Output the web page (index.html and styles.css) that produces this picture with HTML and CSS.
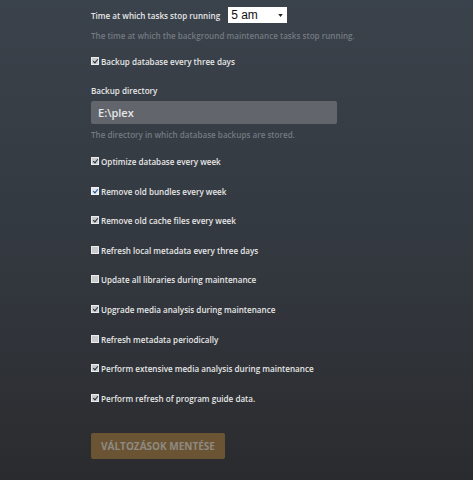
FILE: index.html
```html
<!DOCTYPE html>
<html lang="en">
<head>
    <meta charset="UTF-8">
    <meta name="viewport" content="width=device-width, initial-scale=1.0">
    <title>Scheduled Tasks</title>
    <link rel="stylesheet" href="styles.css">
</head>
<body>
    <div class="settings">
        <div class="time-row">
            <label for="stop_time">Time at which tasks stop running</label>
            <div class="select">
                <span>5 am</span>
                <svg width="5" height="3" viewBox="0 0 6 4"><path d="M0 0h6L3 4z" fill="#222"/></svg>
            </div>
        </div>
        <p class="help help-time">The time at which the background maintenance tasks stop running.</p>

        <div class="check first-check"><span class="box on"></span>Backup database every three days</div>

        <label class="field-label">Backup directory</label>
        <div class="text-input">E:\plex</div>
        <p class="help help-dir">The directory in which database backups are stored.</p>

        <div class="checks">
            <div class="check"><span class="box on"></span>Optimize database every week</div>
            <div class="check"><span class="box on blue"></span>Remove old bundles every week</div>
            <div class="check"><span class="box on"></span>Remove old cache files every week</div>
            <div class="check"><span class="box"></span>Refresh local metadata every three days</div>
            <div class="check"><span class="box"></span>Update all libraries during maintenance</div>
            <div class="check"><span class="box on"></span>Upgrade media analysis during maintenance</div>
            <div class="check"><span class="box"></span>Refresh metadata periodically</div>
            <div class="check"><span class="box on"></span>Perform extensive media analysis during maintenance</div>
            <div class="check"><span class="box on"></span>Perform refresh of program guide data.</div>
        </div>

        <button type="button" class="save">Változások mentése</button>
    </div>
</body>
</html>
```

FILE: styles.css
```css
html, body {
    margin: 0;
    height: 100%;
}

body {
    background: linear-gradient(to bottom, #3a424b 0%, #33383f 55%, #2a2b2e 100%);
    font-family: "Open Sans", "Liberation Sans", sans-serif;
    font-weight: 600;
    font-size: 8.1px;
    color: #e6e6e6;
}

.settings {
    padding: 7px 0 0 91px;
    display: flex;
    flex-direction: column;
    align-items: flex-start;
}

.time-row {
    display: flex;
    align-items: center;
    gap: 8px;
    height: 16px;
}

.select {
    width: 59px;
    height: 16px;
    box-sizing: border-box;
    background: #fff;
    color: #111;
    font-family: "Liberation Sans", Arial, sans-serif;
    font-weight: 400;
    font-size: 12px;
    display: flex;
    align-items: center;
    justify-content: space-between;
    padding: 0 4px 0 3px;
}

.help {
    margin: 0;
    line-height: 14px;
    color: #747a81;
}

.help-time {
    margin-top: 6px;
}

.help-dir {
    margin-top: 4px;
}

.check {
    display: flex;
    align-items: center;
    gap: 2px;
    height: 14px;
    line-height: 14px;
}

.first-check {
    margin-top: 12px;
}

.box {
    width: 8px;
    height: 8px;
    box-sizing: border-box;
    background: #c9cacc;
    border: 1px solid #ececec;
    position: relative;
    margin-top: -2px;
}

.box.on::after {
    content: "";
    position: absolute;
    left: 2px;
    top: 0;
    width: 2px;
    height: 4px;
    border: solid #2a3038;
    border-width: 0 1.5px 1.5px 0;
    transform: rotate(40deg);
}

.box.blue {
    background: #dfe6ee;
    border-color: #f2f2f2;
}

.box.blue::after {
    border-color: #1c4f8a;
}

.field-label {
    margin-top: 15px;
    line-height: 14px;
}

.text-input {
    margin-top: 3px;
    width: 246px;
    height: 23px;
    box-sizing: border-box;
    background: #62666c;
    border-radius: 2px;
    padding: 0 7px;
    line-height: 23px;
    font-size: 11px;
    color: #e6e6e6;
}

.checks {
    margin-top: 13px;
    display: flex;
    flex-direction: column;
    gap: 15.6px;
}

.save {
    margin-top: 27px;
    width: 134px;
    height: 26px;
    border: none;
    border-radius: 2px;
    background: #6a5434;
    color: #8f8a81;
    font-family: "Open Sans", "Liberation Sans", sans-serif;
    font-weight: 700;
    font-size: 10px;
    text-transform: uppercase;
    padding: 0;
}
```
